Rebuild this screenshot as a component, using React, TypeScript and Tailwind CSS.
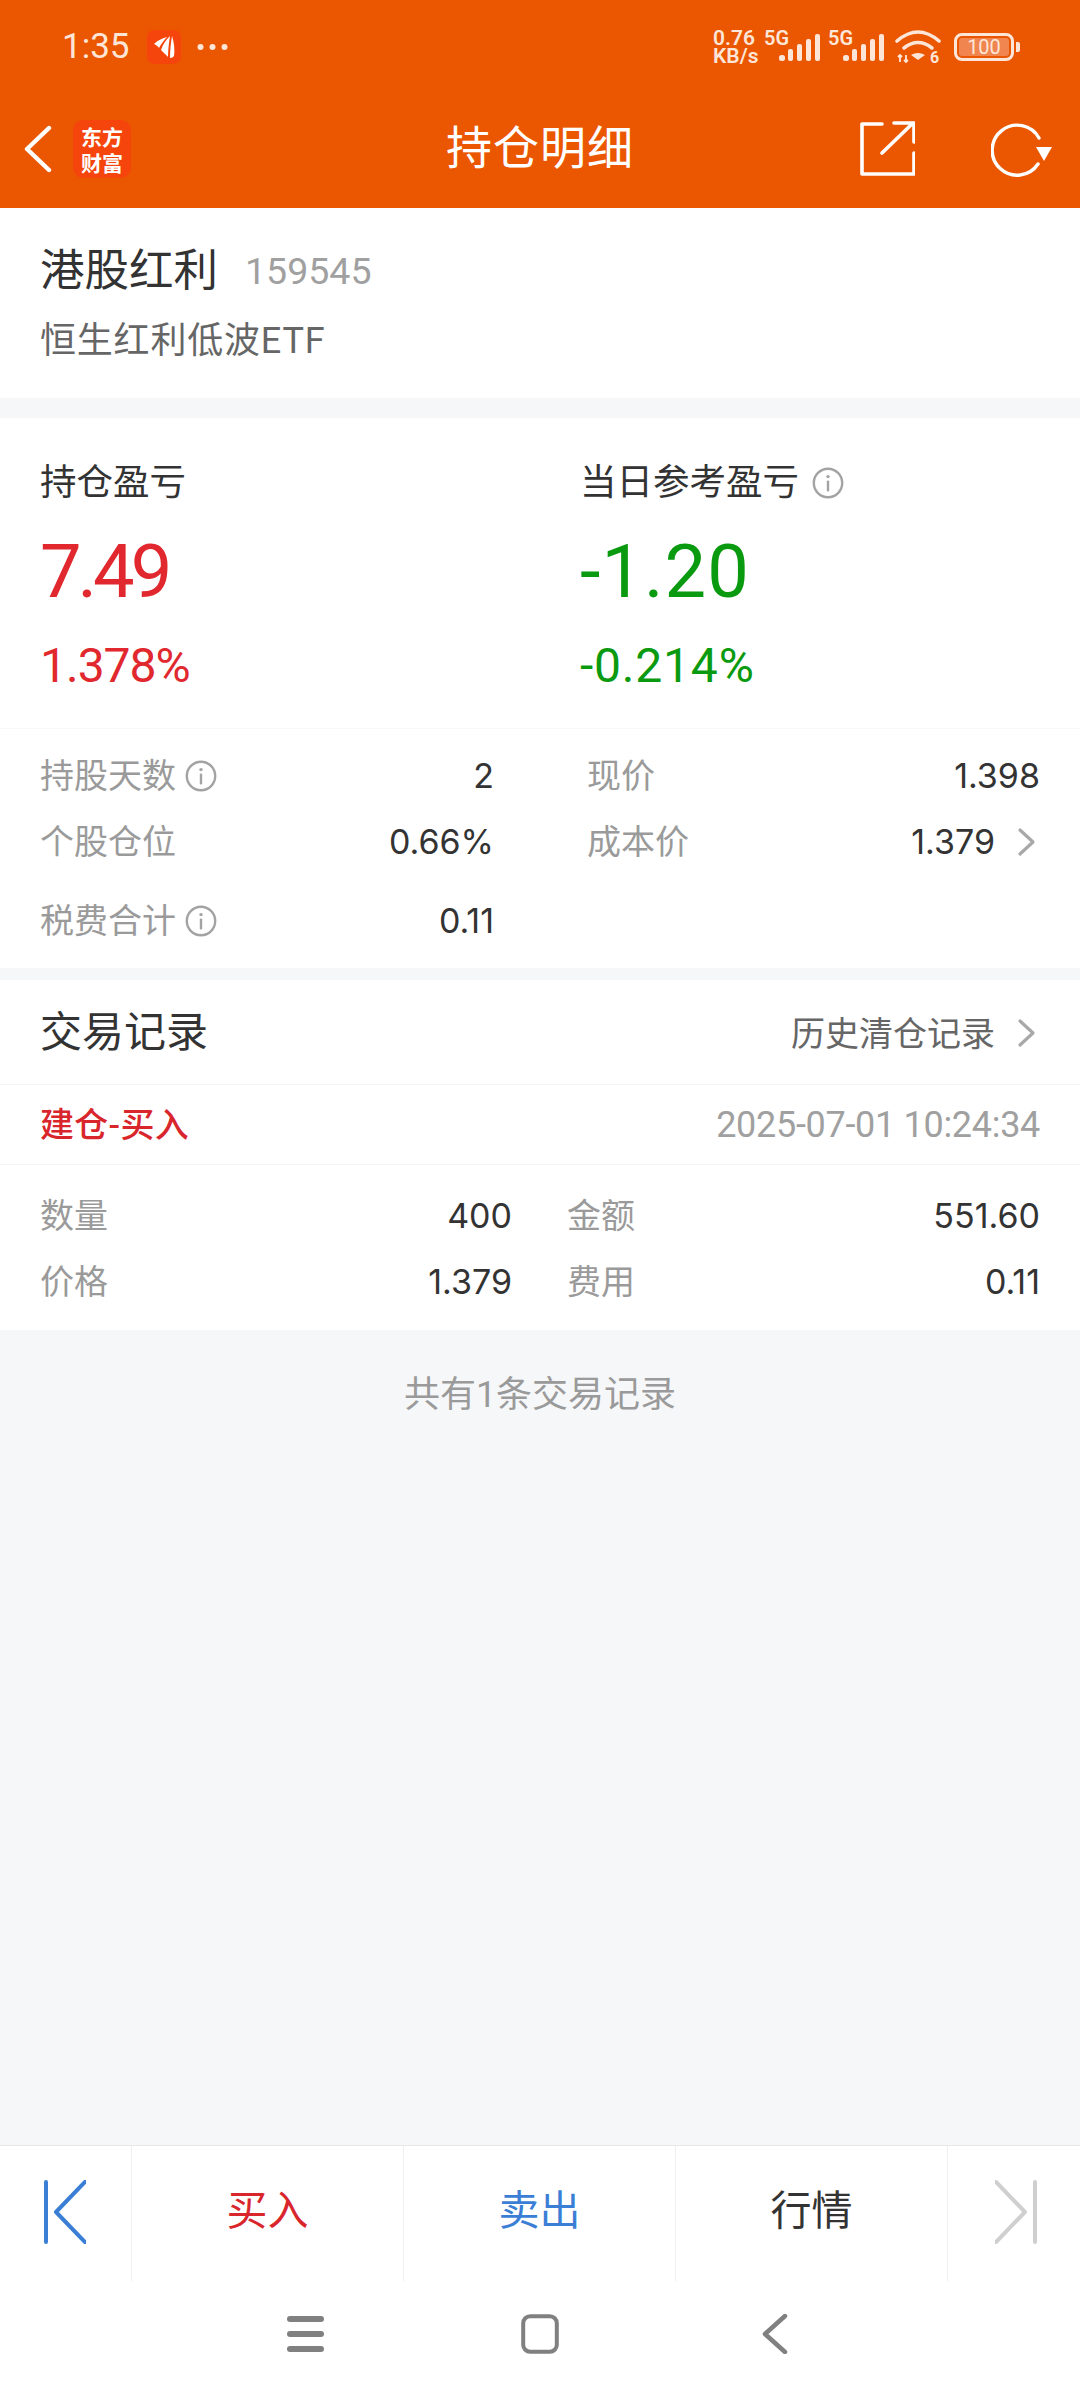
import React from "react";

function Info() {
  return (
    <svg width="32" height="32" viewBox="0 0 32 32" fill="none" className="shrink-0">
      <circle cx="16" cy="16" r="14.2" stroke="#a3a3a3" strokeWidth="2.4" />
      <circle cx="16" cy="9.6" r="1.7" fill="#a3a3a3" />
      <rect x="14.8" y="13.5" width="2.4" height="11" rx="1" fill="#a3a3a3" />
    </svg>
  );
}

function Chevron() {
  return (
    <svg width="20" height="30" viewBox="0 0 20 30" fill="none" className="shrink-0">
      <path d="M3 3l13 12L3 27" stroke="#a8a8a8" strokeWidth="3.2" strokeLinecap="round" strokeLinejoin="round" />
    </svg>
  );
}

function Bars() {
  return (
    <svg width="42" height="28" viewBox="0 0 42 28" className="shrink-0" fill="#fde6d8">
      <rect x="0" y="21" width="6" height="6" rx="2.5" />
      <rect x="9" y="15" width="5" height="12" rx="2" />
      <rect x="18" y="10" width="5" height="17" rx="2" />
      <rect x="27" y="5" width="5" height="22" rx="2" />
      <rect x="36" y="0" width="5" height="27" rx="2" />
    </svg>
  );
}

function Signal() {
  return (
    <div className="relative w-[57px] h-[40px]">
      <span className="absolute left-0 top-[1px] text-[#fde6d8] text-[20px] leading-[20px] font-semibold">5G</span>
      <div className="absolute left-[15px] top-[7px]"><Bars /></div>
    </div>
  );
}

function StatusBar() {
  return (
    <div className="h-[90px] flex items-center pl-[62px] pr-[60px] pt-[3px]">
      <span className="w-[66px] text-[35px] leading-[40px] text-[#fde6d8]">1:35</span>
      <div className="ml-[19px] w-[34px] h-[34px] rounded-[8px] bg-[#f5450c] flex items-center justify-center">
        <svg width="34" height="34" viewBox="0 0 34 34" fill="#fff">
          <path d="M7 14C11 10 16 8 20 7C17 10 14 14 12 18C11 16 9 15 7 14z" />
          <path d="M14 20C16 14 19 10 23 6C22 12 21 20 21 27C19 25 16 22 14 20z" />
          <path d="M25 6C27 12 28 20 27 26C26 27 25 28 23 28C23 20 24 12 25 6z" />
        </svg>
      </div>
      <svg width="32" height="8" viewBox="0 0 32 8" className="ml-[16px]" fill="#fde6d8">
        <circle cx="3.5" cy="4" r="3" />
        <circle cx="15.5" cy="4" r="3" />
        <circle cx="27.5" cy="4" r="3" />
      </svg>
      <div className="flex-1" />
      <div className="w-[50px] text-[#fde6d8] text-[21px] leading-[18px] font-semibold">
        0.76
        <br />
        KB/s
      </div>
      <div className="ml-[1px]"><Signal /></div>
      <div className="ml-[7px]"><Signal /></div>
      <svg width="46" height="40" viewBox="0 -3 46 40" fill="none" className="ml-[10px]">
        <path d="M2 11Q23 -7 44 11" stroke="#fde6d8" strokeWidth="3.6" strokeLinecap="round" />
        <path d="M9 18Q23 7 37 18" stroke="#fde6d8" strokeWidth="3.6" strokeLinecap="round" />
        <path d="M16 25Q23 21 30 25L23 30z" fill="#fde6d8" />
        <path d="M5 25v7M3 27l2-2 2 2M11 25v7M9 30l2 2 2-2" stroke="#fde6d8" strokeWidth="1.8" />
        <text x="35" y="33" fontSize="16" fontWeight="700" fill="#fde6d8" fontFamily="Roboto, sans-serif">6</text>
      </svg>
      <div className="ml-[13px] flex items-center">
        <div className="w-[60px] h-[28px] rounded-[8px] border-[3px] border-[#fde6d8] p-[2px] flex">
          <div className="flex-1 rounded-[3px] bg-[#f08550] flex items-center justify-center text-[20px] leading-[18px] text-[#fde6d8]">100</div>
        </div>
        <div className="ml-[2px] w-[4px] h-[10px] rounded-r-[2px] bg-[#fde6d8]" />
      </div>
    </div>
  );
}

function Header() {
  return (
    <div className="relative h-[118px] flex items-center pl-[24px] pr-[27px]">
      <svg width="28" height="48" viewBox="0 0 28 48" fill="none">
        <path d="M25 3L3 24l22 21" stroke="#fff" strokeWidth="4.4" strokeLinecap="round" strokeLinejoin="round" />
      </svg>
      <div className="ml-[21px] w-[58px] h-[58px] rounded-[10px] bg-[#f5450c] flex flex-col items-center justify-center text-white text-[21px] leading-[26px] font-bold font-['Noto_Sans_CJK_SC',sans-serif]">
        <span>东方</span>
        <span>财富</span>
      </div>
      <div className="absolute left-0 right-0 top-[26px] text-center text-white text-[46px] leading-[64px] tracking-[1px]">持仓明细</div>
      <div className="flex-1" />
      <svg width="56" height="56" viewBox="0 0 56 56" fill="none">
        <path d="M23 3H3v50h52V32" stroke="#fff" strokeWidth="3.6" strokeLinecap="round" strokeLinejoin="round" />
        <path d="M35 2h20v19M54 2L23 32" stroke="#fff" strokeWidth="3.6" strokeLinecap="round" strokeLinejoin="round" />
      </svg>
      <svg width="62" height="56" viewBox="0 0 62 56" fill="none" className="ml-[76px]">
        <path d="M48 17A25 25 0 1 0 47 43" stroke="#fff" strokeWidth="3.4" strokeLinecap="round" />
        <path d="M45 26h16L53 40z" fill="#fff" />
      </svg>
    </div>
  );
}

function StatRow({ label, value, info, className, chevron }: { label: string; value: string; info?: boolean; className?: string; chevron?: boolean }) {
  return (
    <div className={"flex items-center h-[44px] " + (className ?? "")}>
      <span className="text-[34px] leading-[44px] text-[#9a9a9a]">{label}</span>
      {info && <span className="ml-[9px]"><Info /></span>}
      <span className="flex-1" />
      <span className="text-[34px] leading-[44px] text-[#333] font-['Inter',sans-serif]">{value}</span>
      {chevron && <span className="ml-[22px] mr-[3px] flex"><Chevron /></span>}
    </div>
  );
}

function TradeRow({ label, value }: { label: string; value: string }) {
  return (
    <div className="flex items-center justify-between h-[44px]">
      <span className="text-[34px] leading-[44px] text-[#9a9a9a]">{label}</span>
      <span className="text-[34px] leading-[44px] text-[#333] font-['Inter',sans-serif]">{value}</span>
    </div>
  );
}

function Edge({ dir, color }: { dir: "l" | "r"; color: string }) {
  return (
    <svg width="42" height="64" viewBox="0 0 42 64" fill="none">
      {dir === "l" ? (
        <path d="M2 2v60M41 2L12 32l29 30" stroke={color} strokeWidth="4" strokeLinecap="round" strokeLinejoin="round" />
      ) : (
        <path d="M40 2v60M1 2l29 30L1 62" stroke={color} strokeWidth="4" strokeLinecap="round" strokeLinejoin="round" />
      )}
    </svg>
  );
}

export default function App() {
  return (
    <div className="w-[1080px] h-[2400px] flex flex-col bg-[#f6f7f9] overflow-hidden font-['Roboto','Noto_Sans_CJK_SC',sans-serif]">
      <div className="bg-[#eb5600] h-[208px] flex flex-col">
        <StatusBar />
        <Header />
      </div>

      <div className="bg-white h-[190px] px-[40px] pt-[35px]">
        <div className="flex items-center h-[56px]">
          <span className="text-[44.5px] leading-[56px] text-[#333]">港股红利</span>
          <span className="ml-[27px] text-[37.5px] leading-[56px] text-[#a0a0a0]">159545</span>
        </div>
        <div className="mt-[18px] text-[36px] leading-[48px] text-[#666] tracking-[0.8px]">恒生红利低波ETF</div>
      </div>

      <div className="mt-[20px] bg-white h-[550px] flex flex-col">
        <div className="h-[311px] flex flex-col border-b border-[#f8f8f8]">
          <div className="flex px-[40px] pt-[42px]">
            <div className="w-[540px] flex flex-col">
              <div className="h-[46px] flex items-center text-[36.5px] leading-[46px] text-[#333]">持仓盈亏</div>
              <div className="mt-[21px] h-[90px] text-[74px] leading-[90px] tracking-[-4px] text-[#e0282e]">7.49</div>
              <div className="mt-[19px] h-[60px] text-[48px] leading-[60px] tracking-[-1px] text-[#e0282e]">1.378%</div>
            </div>
            <div className="flex-1 flex flex-col">
              <div className="h-[46px] flex items-center text-[36.5px] leading-[46px] text-[#333]">
                <span>当日参考盈亏</span>
                <span className="ml-[13px] flex"><Info /></span>
              </div>
              <div className="mt-[21px] h-[90px] text-[74px] leading-[90px] tracking-[1px] text-[#0a9a10]">-1.20</div>
              <div className="mt-[19px] h-[60px] text-[48px] leading-[60px] tracking-[0.8px] text-[#0a9a10]">-0.214%</div>
            </div>
          </div>
        </div>
        <div className="flex px-[40px] pt-[25px]">
          <div className="w-[454px] flex flex-col">
            <StatRow label="持股天数" value="2" info />
            <StatRow label="个股仓位" value="0.66%" className="mt-[22px]" />
            <StatRow label="税费合计" value="0.11" info className="mt-[35px]" />
          </div>
          <div className="ml-[93px] flex-1 flex flex-col">
            <StatRow label="现价" value="1.398" />
            <StatRow label="成本价" value="1.379" chevron className="mt-[22px]" />
          </div>
        </div>
      </div>

      <div className="mt-[12px] bg-white h-[350px] flex flex-col">
        <div className="h-[105px] px-[40px] pt-[2px] flex items-center border-b border-[#f5f5f5]">
          <span className="text-[42px] leading-[56px] text-[#333]">交易记录</span>
          <span className="flex-1" />
          <span className="mt-[2px] text-[34px] leading-[44px] text-[#666]">历史清仓记录</span>
          <span className="ml-[22px] mr-[3px] flex"><Chevron /></span>
        </div>
        <div className="h-[80px] px-[40px] flex items-center justify-between border-b border-[#f5f5f5]">
          <span className="text-[34px] leading-[44px] tracking-[0.3px] font-medium text-[#d9262c]">建仓-买入</span>
          <span className="text-[36px] leading-[44px] tracking-[-0.3px] text-[#a0a0a0]">2025-07-01 10:24:34</span>
        </div>
        <div className="flex px-[40px] pt-[29px]">
          <div className="w-[472px] flex flex-col gap-[22px]">
            <TradeRow label="数量" value="400" />
            <TradeRow label="价格" value="1.379" />
          </div>
          <div className="ml-[55px] flex-1 flex flex-col gap-[22px]">
            <TradeRow label="金额" value="551.60" />
            <TradeRow label="费用" value="0.11" />
          </div>
        </div>
      </div>

      <div className="flex-1 pt-[41px] text-center text-[36px] leading-[48px] text-[#9a9a9a]">共有1条交易记录</div>

      <div className="bg-white border-t border-[#e8e8e8] h-[136px] flex">
        <div className="w-[132px] border-r border-[#efefef] flex items-center justify-center pr-[2px] pb-[3px]"><Edge dir="l" color="#3a7fd5" /></div>
        <div className="w-[272px] border-r border-[#efefef] flex items-center justify-center pb-[3px] text-[41px] text-[#d9262c]">买入</div>
        <div className="w-[272px] border-r border-[#efefef] flex items-center justify-center pb-[3px] text-[41px] text-[#3a7fd5]">卖出</div>
        <div className="w-[272px] border-r border-[#efefef] flex items-center justify-center pb-[3px] text-[41px] text-[#333]">行情</div>
        <div className="flex-1 flex items-center justify-center pl-[4px] pb-[3px]"><Edge dir="r" color="#cfcfcf" /></div>
      </div>

      <div className="bg-white h-[119px] flex items-start pt-[33px] pl-[287px]">
        <svg width="38" height="36" viewBox="0 0 38 36" fill="#808080" className="mt-[2px]">
          <rect x="0" y="0" width="37" height="6" rx="3" />
          <rect x="0" y="15" width="37" height="6" rx="3" />
          <rect x="0" y="30" width="37" height="6" rx="3" />
        </svg>
        <svg width="38" height="40" viewBox="0 0 38 40" fill="none" className="ml-[196px]">
          <rect x="2.2" y="2.2" width="33.6" height="35.6" rx="7" stroke="#808080" strokeWidth="4" />
        </svg>
        <svg width="26" height="40" viewBox="0 0 26 40" fill="none" className="ml-[203px]">
          <path d="M23 2L3 20l20 18" stroke="#808080" strokeWidth="4.5" strokeLinecap="round" strokeLinejoin="round" />
        </svg>
      </div>
    </div>
  );
}
